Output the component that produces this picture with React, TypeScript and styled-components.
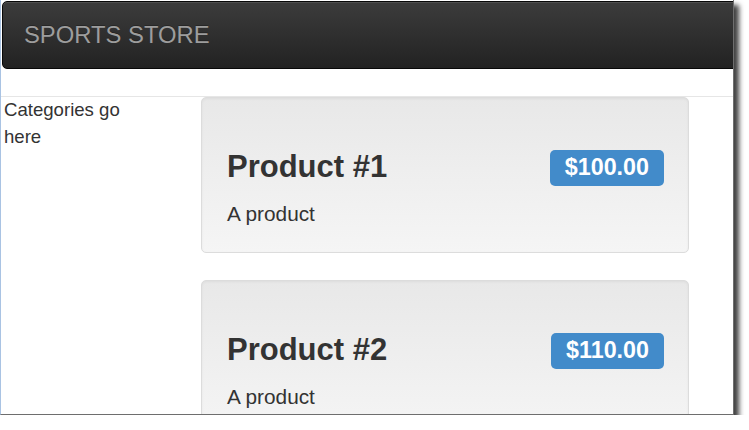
import React from "react";
import styled, { createGlobalStyle } from "styled-components";

const GlobalStyle = createGlobalStyle`
  html, body {
    margin: 0;
    padding: 0;
    background: #ffffff;
  }
  body {
    font-family: "Liberation Sans", Arial, Helvetica, sans-serif;
    color: #333333;
  }
`;

const Frame = styled.div`
  width: 732px;
  height: 414px;
  border-left: 1px solid #a9c3e3;
  border-right: 1px solid #6e6e6e;
  border-bottom: 1px solid #6e6e6e;
  box-shadow: 5px 5px 5px rgba(0, 0, 0, 0.75);
  overflow: hidden;
  background: #ffffff;
  display: flex;
  flex-direction: column;
`;

const Navbar = styled.nav`
  flex: none;
  box-sizing: border-box;
  height: 68px;
  margin: 1px -8px 0 1px;
  border: 1px solid #080808;
  border-radius: 5px;
  background: linear-gradient(to bottom, #3c3c3c 0%, #222222 100%);
  box-shadow: inset 0 1px 0 rgba(255, 255, 255, 0.1);
  display: flex;
  align-items: center;
  padding-left: 21px;
`;

const Brand = styled.span`
  font-size: 23.8px;
  line-height: 1;
  color: #9d9d9d;
  text-shadow: 0 -1px 0 rgba(0, 0, 0, 0.25);
`;

const Main = styled.main`
  margin-top: 27px;
  border-top: 1px solid #e6e6e6;
  display: grid;
  grid-template-columns: 200px 488px;
  align-items: start;
`;

const Sidebar = styled.aside`
  width: 150px;
  padding-left: 3px;
  font-size: 18.6px;
  line-height: 26.5px;
  color: #333333;
`;

const ProductList = styled.section`
  display: flex;
  flex-direction: column;
  gap: 27px;
`;

const Well = styled.article`
  box-sizing: border-box;
  height: 156px;
  padding: 0 24px 25px 25px;
  border: 1px solid #dcdcdc;
  border-radius: 5px;
  background: linear-gradient(to bottom, #e8e8e8 0%, #f5f5f5 100%);
  box-shadow: inset 0 1px 3px rgba(0, 0, 0, 0.05), 0 1px 0 rgba(255, 255, 255, 0.1);
  flex: none;
`;

const Heading = styled.h3`
  margin: 52px 0 0 0;
  height: 34px;
  display: flex;
  justify-content: space-between;
  align-items: flex-start;
`;

const Title = styled.strong`
  font-size: 31px;
  line-height: 34px;
  font-weight: bold;
  color: #333333;
`;

const PriceLabel = styled.span`
  margin-top: 0px;
  padding: 5px 15px 7px;
  font-size: 23.3px;
  line-height: 24px;
  font-weight: bold;
  color: #ffffff;
  background: #428bca;
  border-radius: 5px;
`;

const Lead = styled.p`
  margin: 16px 0 0 0;
  font-size: 20.8px;
  line-height: 28px;
  color: #333333;
`;

const products = [
  { name: "Product #1", price: "$100.00", description: "A product" },
  { name: "Product #2", price: "$110.00", description: "A product" },
];

export default function App() {
  return (
    <>
      <GlobalStyle />
      <Frame>
        <Navbar>
          <Brand>SPORTS STORE</Brand>
        </Navbar>
        <Main>
          <Sidebar>Categories go here</Sidebar>
          <ProductList>
            {products.map((p) => (
              <Well key={p.name}>
                <Heading>
                  <Title>{p.name}</Title>
                  <PriceLabel>{p.price}</PriceLabel>
                </Heading>
                <Lead>{p.description}</Lead>
              </Well>
            ))}
          </ProductList>
        </Main>
      </Frame>
    </>
  );
}
